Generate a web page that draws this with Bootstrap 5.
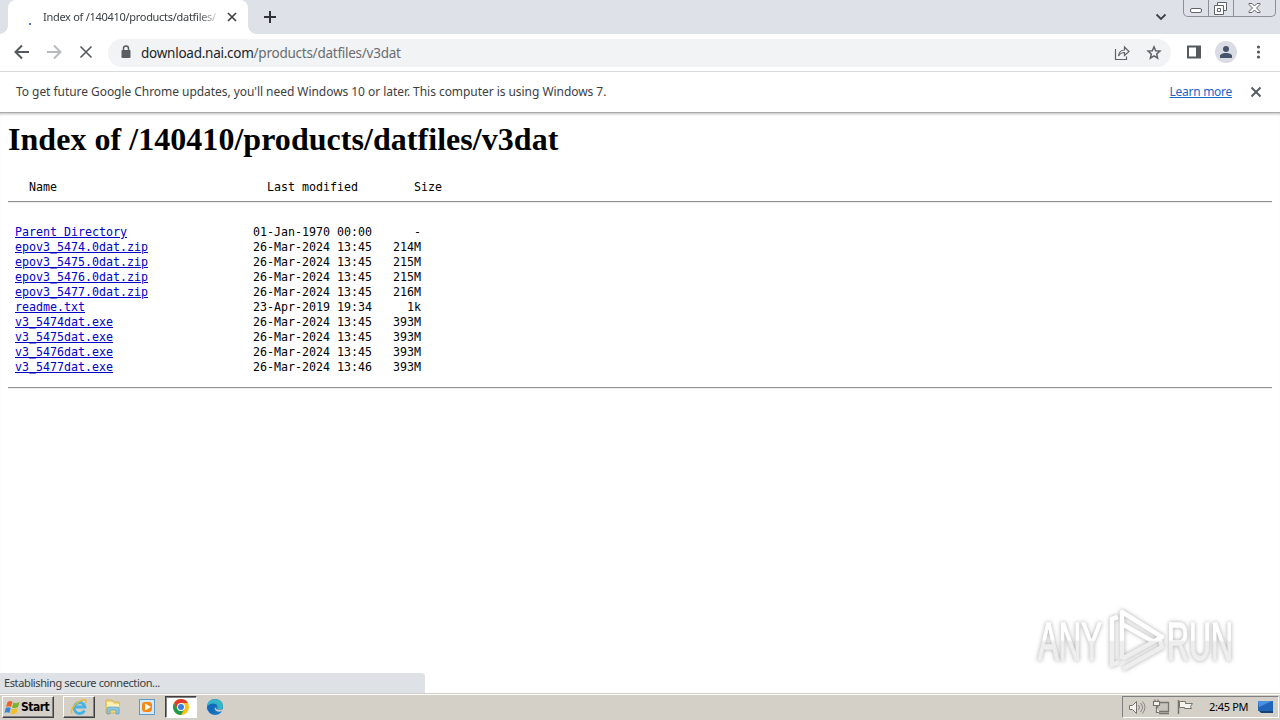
<!DOCTYPE html>
<html lang="en">
  <head>
    <meta charset="UTF-8" />
    <meta name="viewport" content="width=device-width, initial-scale=1.0" />
    <title>Index of /140410/products/datfiles/v3dat</title>
    <link
      rel="stylesheet"
      href="https://cdn.jsdelivr.net/npm/bootstrap@5.3.2/dist/css/bootstrap.min.css"
    />
    <style>
      body {
        width: 1280px;
        height: 720px;
        font-family: "Noto Sans", sans-serif;
        font-size: 12px;
        line-height: 16px;
        color: #3c4043;
      }
      svg {
        display: block;
        flex: none;
      }
      .tab-strip {
        height: 34px;
        background: #dee1e8;
        padding-left: 8px;
      }
      .page-tab {
        width: 240px;
        height: 34px;
        background: #fff;
        border-radius: 8px 8px 0 0;
        position: relative;
      }
      .page-tab::before,
      .page-tab::after {
        content: "";
        position: absolute;
        bottom: 0;
        width: 8px;
        height: 8px;
      }
      .page-tab::before {
        left: -8px;
        background: radial-gradient(circle at 0 0, transparent 7.5px, #fff 8px);
      }
      .page-tab::after {
        right: -8px;
        background: radial-gradient(circle at 100% 0, transparent 7.5px, #fff 8px);
      }
      .spinner-dot {
        width: 2px;
        height: 2px;
        background: #3578d8;
        margin: 13px 12px 0 21px;
      }
      .tab-title {
        width: 173px;
        font-size: 11px;
        letter-spacing: -0.29px;
        white-space: nowrap;
        -webkit-mask-image: linear-gradient(90deg, #000 155px, rgba(0, 0, 0, 0.2) 174px);
      }
      .window-buttons {
        width: 93px;
        height: 17px;
        margin-right: 4px;
        border: 1px solid #8c8f96;
        border-top: 0;
        border-radius: 0 0 5px 5px;
      }
      .toolbar {
        height: 38px;
        border-bottom: 1px solid #d9dadc;
      }
      .address {
        width: 1063px;
        height: 28px;
        border-radius: 14px;
        background: #f1f3f4;
        font-size: 13.5px;
        letter-spacing: -0.25px;
        color: #6a6d71;
      }
      .info-bar {
        height: 41px;
        padding: 0 16px;
        border-bottom: 1px solid #aaa;
      }
      .info-text {
        letter-spacing: -0.05px;
      }
      .learn-link {
        letter-spacing: -0.28px;
        color: #1a67c9;
      }
      .index-page {
        height: 580px;
        padding: 0 8px;
        color: #000;
        box-shadow: inset 0 3px 3px -2px #bbb;
      }
      .index-page h1 {
        font: bold 32px/36px "Liberation Serif", serif;
        letter-spacing: 0.04px;
        margin: 0;
        padding-top: 8px;
      }
      .list-head {
        padding-top: 23px;
        margin-bottom: 6px !important;
      }
      #listing {
        padding: 22px 0 12px;
      }
      .index-page pre {
        font: 11.63px/15px "DejaVu Sans Mono", monospace;
        margin: 0;
        overflow: hidden;
      }
      .index-page pre div {
        height: 15px;
      }
      .index-page pre a {
        color: #0000c8;
      }
      .rule {
        height: 2px;
        border-top: 1px solid #909090;
        border-bottom: 1px solid #eee;
      }
      .any-run {
        position: absolute;
        left: 1030px;
        top: 600px;
        filter: drop-shadow(0 0 2px #aaa);
        font-family: "Liberation Sans", sans-serif;
        font-size: 53px;
      }
      .status-bubble {
        position: absolute;
        left: 0;
        top: 673px;
        width: 425px;
        height: 20px;
        padding: 2px 4px;
        background: #dee1e6;
        border-radius: 0 4px 0 0;
        font-size: 11px;
        letter-spacing: -0.38px;
      }
      .task-bar {
        height: 27px;
        background: #d4d0c8;
        border-top: 1px solid #d4d0c8;
        box-shadow: inset 0 1px #fff;
        color: #000;
      }
      .raised {
        border: 1px solid;
        border-color: #fff #404040 #404040 #fff;
        box-shadow: inset -1px -1px #808080;
      }
      .sunken {
        border: 1px solid;
        border-color: #404040 #fff #fff #404040;
        box-shadow: inset 1px 1px #808080;
        background: #fff;
      }
      .start {
        width: 52px;
        height: 22px;
        margin: 0 9px 0 2px;
        padding-left: 1px;
        font: bold 12px/16px "DejaVu Sans", sans-serif;
        font-stretch: condensed;
        letter-spacing: -0.5px;
      }
      .task {
        width: 32px;
        height: 22px;
      }
      .tray {
        width: 157px;
        height: 22px;
        margin-right: 1px;
        border: 1px solid;
        border-color: #808080 #fff #fff #808080;
        font-size: 11px;
        letter-spacing: -0.3px;
      }
    </style>
  </head>
  <body class="overflow-hidden position-relative bg-white">
    <header>
      <div class="tab-strip d-flex">
        <div class="page-tab d-flex align-items-center">
          <div class="spinner-dot"></div>
          <div class="tab-title">Index of /140410/products/datfiles/</div>
          <svg class="ms-2" width="16" height="16"><path d="M4 4l8 8M12 4l-8 8" stroke="#3c4043" stroke-width="1.6" /></svg>
        </div>
        <svg class="ms-2" width="28" height="34"><path d="M8 17h12M14 11v12" stroke="#303238" stroke-width="2" /></svg>
        <svg class="ms-auto" width="33" height="34"><path d="M6.500 14.500l4.500 4.500 4.500-4.500" fill="none" stroke="#3c4043" stroke-width="1.8" /></svg>
        <div class="window-buttons">
          <svg width="91" height="16" fill="none" stroke="#5f636b">
            <path d="M24.500 0v16M49.500 0v16" stroke="#8c8f96" />
            <rect x="6.500" y="8.500" width="11" height="4" rx="1.500" fill="#fff" />
            <path d="M33.500 5.500v-3h9v8h-3" fill="#fff" />
            <path d="M30.500 5.500h9v9h-9zM33.500 8.500h3v3h-3z" fill="#fff" />
            <path d="M65 3.500h3l2.500 2.500 2.500-2.500h3v1l-3.500 3.500 3.500 3.500v1h-3l-2.500-2.500-2.500 2.500h-3v-1l3.500-3.500-3.500-3.500z" fill="#fff" />
          </svg>
        </div>
      </div>

      <div class="toolbar d-flex align-items-center">
        <svg width="108" height="37" fill="none" stroke-width="2">
          <path d="M29 18H16M22 11.500L15.500 18l6.500 6.500" stroke="#55585c" />
          <path d="M47 18h13M54 11.500l6.500 6.500-6.500 6.500" stroke="#b9babd" />
          <path d="M80.500 12.500l11 11M91.500 12.500l-11 11" stroke="#55585c" stroke-width="1.6" />
        </svg>
        <div class="address d-flex align-items-center">
          <svg width="33" height="28"><rect x="13.500" y="11" width="9" height="8" rx="1" fill="#5a5d62" /><path d="M15.500 11.500V9.500a2.500 2.500 0 0 1 5 0v2" fill="none" stroke="#5a5d62" stroke-width="1.500" /></svg>
          <span><span class="text-dark">download.nai.com</span>/products/datfiles/v3dat</span>
          <svg class="ms-auto" width="64" height="28" fill="none" stroke="#5f6368" stroke-width="1.200">
            <path d="M8.500 10v10.500h11v-3M11.500 17c.5-4 3-6 6-6V8l4.500 4.500-4.500 4v-3c-2.500 0-4.500 1-6 3.500z" />
            <path d="M47 7.800l1.700 3.900 4.200.4-3.200 2.800.9 4.200-3.600-2.200-3.600 2.200.9-4.200-3.200-2.800 4.200-.4z" stroke-width="1.500" />
          </svg>
        </div>
        <svg width="109" height="37">
          <path d="M17 12.500h12v11H17z" fill="none" stroke="#55585c" stroke-width="2" />
          <path d="M25 12h5v12h-5z" fill="#55585c" />
          <circle cx="55" cy="18" r="11" fill="#d9dde3" />
          <circle cx="55" cy="15" r="3" fill="#46536b" />
          <path d="M49 24v-2c0-4 12-4 12 0v2z" fill="#46536b" />
          <g fill="#55585c"><circle cx="87.500" cy="13" r="1.600" /><circle cx="87.500" cy="18" r="1.600" /><circle cx="87.500" cy="23" r="1.600" /></g>
        </svg>
      </div>

      <div class="info-bar d-flex align-items-center">
        <span class="info-text">To get future Google Chrome updates, you'll need Windows 10 or later. This computer is using Windows 7.</span>
        <a class="ms-auto learn-link" href="#">Learn more</a>
        <svg class="ms-3" width="16" height="16"><path d="M3.500 3.500l9 9M12.500 3.500l-9 9" stroke="#55585c" stroke-width="1.8" /></svg>
      </div>
    </header>

    <main class="index-page">
      <h1>Index of /140410/products/datfiles/v3dat</h1>
      <pre class="list-head">   Name                              Last modified        Size</pre>
      <div class="rule"></div>
      <pre id="listing"></pre>
      <div class="rule"></div>
    </main>

    <footer class="task-bar d-flex align-items-center">
      <div class="start raised d-flex align-items-center">
        <svg width="17" height="17" viewBox="0 0 16 17">
          <path d="M3 3q3-2 5 0L6.500 8Q4 6.500 1.500 8z" fill="#e8622a" />
          <path d="M9 3.500q3 1.500 6-.5L13.500 8q-3 2-6 .5z" fill="#79b52c" />
          <path d="M1.200 9q2.500-1.500 5 0L5 14q-2.500-1.500-5 0z" fill="#3987d3" />
          <path d="M7.200 9.500q3 1.500 6-.5L12 14q-3 2-6 .5z" fill="#f5bd28" />
        </svg>
        <span>Start</span>
      </div>
      <!-- Internet Explorer -->
      <div class="task raised me-2 d-flex align-items-center justify-content-center">
        <svg width="18" height="18" fill="none">
          <path d="M14.500 12.500A5.500 5.500 0 1 1 15 9H5" stroke="#45b3e6" stroke-width="2.800" />
          <path d="M2.500 15.500C-1 13 5 5 11 2.500c5-2 6 0 4.500 3" stroke="#e9b936" stroke-width="1.500" />
        </svg>
      </div>
      <!-- Explorer -->
      <svg width="20" height="20">
        <path d="M3 3h6l1 2h6v11H3z" fill="#f0d579" stroke="#d8b453" />
        <path d="M4 5h6l1 2h5v3H4z" fill="#fff1b5" />
        <path d="M4 17v-5q0-2 2-2h8q2 0 2 2v5h-3v-4H7v4z" fill="#8cc5df" stroke="#5ba2c5" stroke-width=".7" />
      </svg>
      <!-- Media Player -->
      <svg width="34" height="20" viewBox="-10 0 34 20">
        <rect x="6.500" y="2.500" width="15" height="15" fill="#d4e9f7" stroke="#5f9bc6" />
        <rect x="9" y="5" width="10" height="10" rx="3" fill="#f48a13" />
        <path d="M12 6.500v7l6-3.500z" fill="#fff" />
      </svg>
      <!-- Chrome -->
      <div class="task sunken ms-2 d-flex align-items-center justify-content-center">
        <svg width="18" height="18" viewBox="0 0 18 18">
          <circle cx="9" cy="9" r="8" fill="#fbc116" />
          <path d="M2.070 5A8 8 0 0 1 15.930 5H9L5.500 11z" fill="#e33b2e" />
          <path d="M2.070 5A8 8 0 0 0 9 17l3.500-6-3.500 2-3.500-2z" fill="#229a4a" />
          <circle cx="9" cy="9" r="4" fill="#fff" />
          <circle cx="9" cy="9" r="3" fill="#3a7ce0" />
        </svg>
      </div>
      <!-- Edge -->
      <svg class="ms-2" width="20" height="20" viewBox="0 0 20 20">
        <circle cx="10" cy="10" r="8" fill="#1676c5" />
        <path d="M2 10C2 0 18-.5 18 9c0 3-3 4-6 3 1-2 1-5-3-5-3 0-6 1-7 3z" fill="#36b5c9" />
        <path d="M2 10c2-4 10-5 10 0-3-1-5 3-2 6-4 0-8-2-8-6z" fill="#126ab8" />
        <path d="M10 10c-1 3 2 6 7 4l1-2.500c-2 2-7 2-8-1.500z" fill="#d4d0c8" />
      </svg>

      <div class="tray ms-auto d-flex align-items-center">
        <svg width="86" height="20" fill="#f5f3ee" stroke="#77746e">
          <path d="M6.500 8.500h3l4-4v12l-4-4h-3z" />
          <path d="M15.500 8q2 2 0 5M17.500 6q4 4 0 9M19.500 4.500q5 5.500 0 12" fill="none" stroke-width=".8" />
          <path d="M34.500 5.500h11v9h-11zM36 16.500h10" fill="#c7c4bd" stroke-width="1.300" />
          <path d="M30.500 4.500h6v4h-6zM33.500 9v6.500h3M32 4.500v-2M35 4.500v-2" stroke-width="1.200" />
          <path d="M55.500 3v14" stroke-width="1.500" />
          <path d="M56.500 4.500h6v2h7l-2 3 1 2h-7v-1h-5z" />
        </svg>
        <span>2:45 PM</span>
        <svg class="ms-auto me-1" width="17" height="16">
          <path d="M1 2h15v10H1z" fill="#2165bb" />
          <path d="M1 2h14L2 8z" fill="#4b91df" />
          <path d="M2 12h14v2H4z" fill="#164275" />
        </svg>
      </div>
    </footer>

    <svg class="any-run" width="220" height="80">
      <defs>
        <linearGradient id="fade" gradientUnits="userSpaceOnUse" x1="0" y1="0" x2="0" y2="80">
          <stop offset=".5" stop-color="#fff" />
          <stop offset=".52" stop-color="#eee" />
        </linearGradient>
      </defs>
      <g fill="url(#fade)" stroke="url(#fade)" stroke-width="1.500">
        <text x="8" y="60" textLength="64" lengthAdjust="spacingAndGlyphs">ANY</text>
        <text x="137" y="60" textLength="66" lengthAdjust="spacingAndGlyphs">RUN</text>
      </g>
      <g fill="none" stroke="url(#fade)" stroke-width="4.500" stroke-linejoin="round">
        <path d="M92 59V12l40 25-40 22" />
        <path d="M92 24l32 18M88 17l-6 2v46l7-3" />
        <path d="M93 69l39-22-2-7" />
      </g>
    </svg>

    <div class="status-bubble">Establishing secure connection...</div>
  </body>
  <script src="https://cdn.jsdelivr.net/npm/bootstrap@5.3.2/dist/js/bootstrap.bundle.min.js"></script>
  <script>
    const files = [
      ["Parent Directory", "01-Jan-1970 00:00", "-"],
      ["epov3_5474.0dat.zip", "26-Mar-2024 13:45", "214M"],
      ["epov3_5475.0dat.zip", "26-Mar-2024 13:45", "215M"],
      ["epov3_5476.0dat.zip", "26-Mar-2024 13:45", "215M"],
      ["epov3_5477.0dat.zip", "26-Mar-2024 13:45", "216M"],
      ["readme.txt", "23-Apr-2019 19:34", "1k"],
      ["v3_5474dat.exe", "26-Mar-2024 13:45", "393M"],
      ["v3_5475dat.exe", "26-Mar-2024 13:45", "393M"],
      ["v3_5476dat.exe", "26-Mar-2024 13:45", "393M"],
      ["v3_5477dat.exe", "26-Mar-2024 13:46", "393M"],
    ];
    document.getElementById("listing").innerHTML = files
      .map(([name, date, size]) => `<div> <a href="#">${name}</a>${" ".repeat(34 - name.length)}${date}${size.padStart(7)}</div>`)
      .join("");
  </script>
</html>
